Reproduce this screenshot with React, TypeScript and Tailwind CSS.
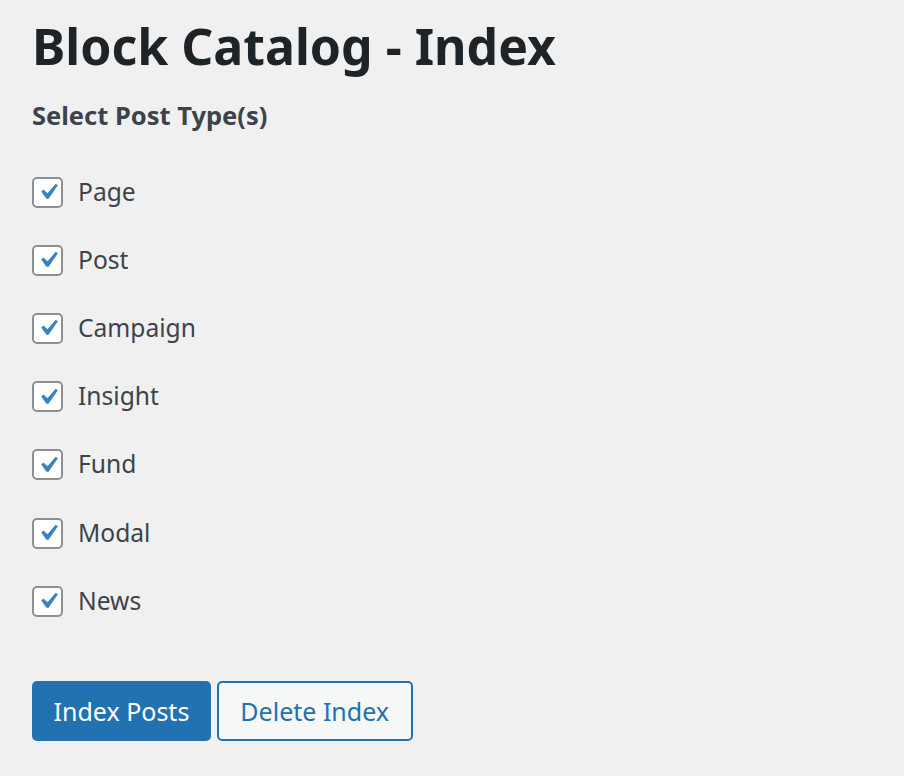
import { useState } from "react"

const postTypes = ["Page", "Post", "Campaign", "Insight", "Fund", "Modal", "News"]

function CheckRow({ label }: { label: string }) {
  const [checked, setChecked] = useState(true)
  return (
    <label className="flex items-center gap-[15px] h-[68.2px] cursor-pointer">
      <span
        onClick={() => setChecked(!checked)}
        className="w-[31px] h-[31px] rounded-[5px] border-2 border-[#8c8f94] bg-white flex items-center justify-center"
      >
        {checked && (
          <svg width="32" height="32" viewBox="0 0 20 20" className="shrink-0">
            <path d="M14.83 4.89l1.34.94-5.81 8.38H9.02L5.78 9.67l1.34-1.25 2.57 2.4z" fill="#3582c4" />
          </svg>
        )}
      </span>
      <span className="text-[24.6px] text-[#3c434a]">{label}</span>
    </label>
  )
}

export default function App() {
  return (
    <div className="min-h-screen bg-[#f0f0f1] px-[32px] pt-[12px] font-['Noto_Sans',sans-serif]">
      <h1 className="text-[50px] font-bold text-[#1d2327] leading-[68px]">Block Catalog - Index</h1>
      <h2 className="mt-[17px] text-[25.5px] font-bold text-[#3c434a] leading-[36px]">Select Post Type(s)</h2>
      <div className="mt-[25px] flex flex-col">
        {postTypes.map((t) => (
          <CheckRow key={t} label={t} />
        ))}
      </div>
      <div className="mt-[46px] flex gap-[6px]">
        <button className="h-[60px] px-[21.5px] rounded-[5px] bg-[#2271b1] text-white text-[25px]">Index Posts</button>
        <button className="h-[60px] px-[21.5px] rounded-[5px] bg-[#f6f7f7] border-2 border-[#2271b1] text-[#2271b1] text-[25px]">
          Delete Index
        </button>
      </div>
    </div>
  )
}
